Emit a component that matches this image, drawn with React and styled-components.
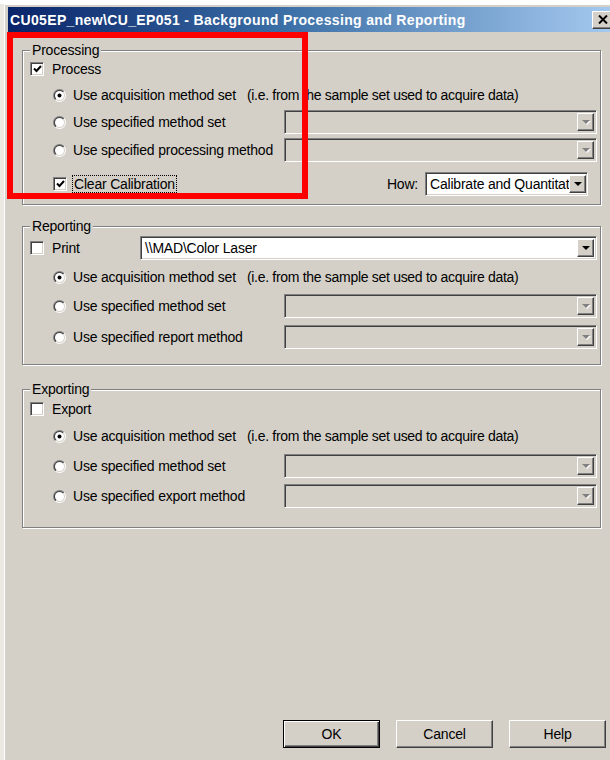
import React from "react";
import styled, { createGlobalStyle, css } from "styled-components";

const GlobalStyle = createGlobalStyle`
  html, body {
    margin: 0;
    background: #fff;
    overflow: hidden;
  }
  body {
    font-family: "Liberation Sans", Arial, sans-serif;
    font-size: 14px;
    color: #000;
  }
`;

const sunken = css`
  border: 1px solid;
  border-color: #808080 #fff #fff #808080;
  box-shadow: inset 1px 1px 0 #404040, inset -1px -1px 0 #d4d0c8;
`;

const raised = css`
  border: 1px solid;
  border-color: #fff #404040 #404040 #fff;
  box-shadow: inset -1px -1px 0 #808080, inset 1px 1px 0 #d4d0c8;
`;

const Screen = styled.div`
  position: relative;
  width: 610px;
  height: 760px;
  overflow: hidden;
  background: linear-gradient(#fff 0 4px, #ece9e2 4px);
`;

const Frame = styled.div`
  margin: 4px 0 0 4px;
  padding: 3px 4px 0 4px;
  width: 615px;
  height: 756px;
  box-sizing: border-box;
  background: #d4d0c8;
  box-shadow: inset 1px 1px 0 #fff;
`;

const TitleBar = styled.div`
  height: 25px;
  display: flex;
  align-items: center;
  justify-content: space-between;
  padding: 0 2px;
  background: linear-gradient(90deg, #0a246a 0%, #3a6ea5 45%, #a6caf0 100%);
  color: #fff;
  font-weight: bold;
  font-size: 14px;
  letter-spacing: 0.35px;
  white-space: nowrap;
`;

const CloseButton = styled.div`
  ${raised};
  width: 19px;
  height: 16px;
  background: #d4d0c8;
  display: flex;
  align-items: center;
  justify-content: center;
`;

const Group = styled.div`
  margin: ${(p) => p.$mt}px 0 0 14px;
  width: 579px;
  box-sizing: border-box;
  border: 1px solid #808080;
  box-shadow: inset 1px 1px 0 #fff, 1px 1px 0 #fff;
  padding: 0 3px ${(p) => p.$pb}px 0;
`;

const Legend = styled.div`
  display: table;
  height: 14px;
  line-height: 14px;
  margin: -8px 0 0 7px;
  padding: 0 2px;
  background: #d4d0c8;
  letter-spacing: -0.2px;
`;

const Row = styled.div`
  display: flex;
  align-items: center;
  height: 24px;
  margin-top: ${(p) => p.$mt}px;
  padding-left: ${(p) => p.$indent}px;
`;

const Option = styled.label`
  display: flex;
  align-items: center;
  gap: ${(p) => p.$gap}px;
  width: ${(p) => (p.$width ? `${p.$width}px` : "auto")};
  flex-shrink: 0;
  white-space: nowrap;
  letter-spacing: -0.2px;
`;

const Hint = styled.span`
  margin-left: 4px;
  letter-spacing: -0.3px;
`;

const Focused = styled.span`
  outline: 1px dotted #000;
  outline-offset: 0;
  padding: 0 1px;
  line-height: 16px;
`;

const CheckBox = styled.span`
  ${sunken};
  width: 12px;
  height: 12px;
  background: #fff;
  display: flex;
  align-items: center;
  justify-content: center;
  flex-shrink: 0;
`;

const Combo = styled.div`
  ${sunken};
  flex: ${(p) => (p.$width ? "none" : 1)};
  width: ${(p) => (p.$width ? `${p.$width}px` : "auto")};
  height: 24px;
  box-sizing: border-box;
  margin-right: ${(p) => p.$mr || 0}px;
  background: ${(p) => (p.$disabled ? "#d4d0c8" : "#fff")};
  display: flex;
  align-items: stretch;
  padding: 2px;
  overflow: hidden;
`;

const ComboText = styled.span`
  flex: 1;
  padding-left: 2px;
  line-height: 18px;
  white-space: nowrap;
  letter-spacing: -0.2px;
`;

const ArrowButton = styled.span`
  ${raised};
  width: 15px;
  flex-shrink: 0;
  background: #d4d0c8;
  display: flex;
  align-items: center;
  justify-content: center;
`;

const Arrow = styled.span`
  width: 0;
  height: 0;
  border-left: 4px solid transparent;
  border-right: 4px solid transparent;
  border-top: 4px solid ${(p) => (p.$disabled ? "#808080" : "#000")};
  filter: ${(p) => (p.$disabled ? "drop-shadow(1px 1px 0 #fff)" : "none")};
`;

const HowLabel = styled.span`
  margin-left: auto;
  margin-right: 7px;
  letter-spacing: -0.2px;
`;

const ButtonRow = styled.div`
  display: flex;
  gap: 16px;
  margin: 192px 0 0 275px;
`;

const Button = styled.div`
  width: 97px;
  height: 28px;
  box-sizing: border-box;
  background: #d4d0c8;
  display: flex;
  align-items: center;
  justify-content: center;
  letter-spacing: -0.2px;
  ${(p) =>
    p.$default
      ? css`
          border: 1px solid #000;
          box-shadow: inset 1px 1px 0 #fff, inset -1px -1px 0 #404040,
            inset -2px -2px 0 #808080;
        `
      : raised}
`;

const Highlight = styled.div`
  position: absolute;
  left: 7px;
  top: 32px;
  width: 301px;
  height: 167px;
  box-sizing: border-box;
  border: 6px solid #ff0000;
  pointer-events: none;
`;

const Check = ({ checked }) => (
  <CheckBox>
    {checked && (
      <svg width="9" height="8" viewBox="0 0 9 8">
        <path d="M1 3.5 L3.5 6 L8 1" fill="none" stroke="#000" strokeWidth="2" />
      </svg>
    )}
  </CheckBox>
);

const Radio = ({ checked }) => (
  <svg width="13" height="13" viewBox="0 0 13 13" style={{ flexShrink: 0 }}>
    <defs>
      <linearGradient id="rOuter" x1="0" y1="0" x2="1" y2="1">
        <stop offset="0.5" stopColor="#808080" />
        <stop offset="0.5" stopColor="#fff" />
      </linearGradient>
      <linearGradient id="rInner" x1="0" y1="0" x2="1" y2="1">
        <stop offset="0.5" stopColor="#404040" />
        <stop offset="0.5" stopColor="#d4d0c8" />
      </linearGradient>
    </defs>
    <circle cx="6.5" cy="6.5" r="6.5" fill="url(#rOuter)" />
    <circle cx="6.5" cy="6.5" r="5.5" fill="url(#rInner)" />
    <circle cx="6.5" cy="6.5" r="4.5" fill="#fff" />
    {checked && <circle cx="6.5" cy="6.5" r="2" fill="#000" />}
  </svg>
);

const Dropdown = ({ text, disabled, width, mr }) => (
  <Combo $disabled={disabled} $width={width} $mr={mr}>
    <ComboText>{text}</ComboText>
    <ArrowButton>
      <Arrow $disabled={disabled} />
    </ArrowButton>
  </Combo>
);

const SourceRows = ({ lastLabel, gaps }) => (
  <>
    <Row $mt={gaps[0]} $indent={30}>
      <Option $gap={7}>
        <Radio checked />
        Use acquisition method set
        <Hint>(i.e. from the sample set used to acquire data)</Hint>
      </Option>
    </Row>
    <Row $mt={gaps[1]} $indent={30}>
      <Option $gap={7} $width={231}>
        <Radio />
        Use specified method set
      </Option>
      <Dropdown disabled />
    </Row>
    <Row $mt={gaps[2]} $indent={30}>
      <Option $gap={7} $width={231}>
        <Radio />
        {lastLabel}
      </Option>
      <Dropdown disabled />
    </Row>
  </>
);

export default function App() {
  return (
    <Screen>
      <GlobalStyle />
      <Frame>
        <TitleBar>
          <span>CU05EP_new\CU_EP051 - Background Processing and Reporting</span>
          <CloseButton>
            <svg width="10" height="9" viewBox="0 0 10 9">
              <path d="M1 0.5 L9 8.5 M9 0.5 L1 8.5" stroke="#000" strokeWidth="2" />
            </svg>
          </CloseButton>
        </TitleBar>

        <Group $mt={18} $pb={8}>
          <Legend>Processing</Legend>
          <Row $mt={0} $indent={7}>
            <Option $gap={8}>
              <Check checked />
              Process
            </Option>
          </Row>
          <SourceRows lastLabel="Use specified processing method" gaps={[2, 3, 4]} />
          <Row $mt={10} $indent={30}>
            <Option $gap={6}>
              <Check checked />
              <Focused>Clear Calibration</Focused>
            </Option>
            <HowLabel>How:</HowLabel>
            <Dropdown text="Calibrate and Quantitat" width={163} mr={9} />
          </Row>
        </Group>

        <Group $mt={21} $pb={15}>
          <Legend>Reporting</Legend>
          <Row $mt={3} $indent={7}>
            <Option $gap={8} $width={110}>
              <Check />
              Print
            </Option>
            <Dropdown text="\\MAD\Color Laser" />
          </Row>
          <SourceRows lastLabel="Use specified report method" gaps={[5, 5, 7]} />
        </Group>

        <Group $mt={24} $pb={19}>
          <Legend>Exporting</Legend>
          <Row $mt={1} $indent={7}>
            <Option $gap={8}>
              <Check />
              Export
            </Option>
          </Row>
          <SourceRows lastLabel="Use specified export method" gaps={[3, 6, 6]} />
        </Group>

        <ButtonRow>
          <Button $default>OK</Button>
          <Button>Cancel</Button>
          <Button>Help</Button>
        </ButtonRow>
      </Frame>
      <Highlight />
    </Screen>
  );
}
